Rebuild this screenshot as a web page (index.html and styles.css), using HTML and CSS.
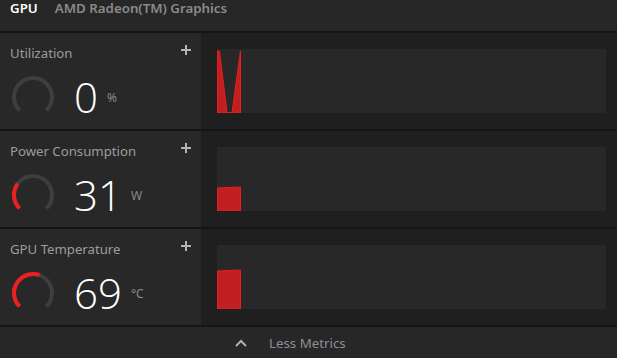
FILE: index.html
```html
<!DOCTYPE html>
<html lang="en">
<head>
    <meta charset="UTF-8">
    <meta name="viewport" content="width=device-width, initial-scale=1.0">
    <title>GPU Metrics</title>
    <link rel="stylesheet" href="styles.css">
</head>
<body>
    <div class="app">
        <!-- Device header -->
        <div class="header">
            <span class="tab active">GPU</span>
            <span class="tab">AMD Radeon(TM) Graphics</span>
        </div>

        <!-- Utilization -->
        <div class="metric">
            <div class="metric-info">
                <div class="metric-title">
                    <span class="label">Utilization</span>
                    <svg class="plus" width="10" height="10" viewBox="0 0 10 10"><path d="M5 0V10M0 5H10"/></svg>
                </div>
                <div class="reading">
                    <svg class="gauge" width="46" height="46" viewBox="0 0 46 46">
                        <path class="track" d="M9.565 36.435A19 19 0 1 1 36.435 36.435"/>
                    </svg>
                    <span class="value">0</span>
                    <span class="unit">%</span>
                </div>
            </div>
            <div class="metric-chart">
                <svg class="chart" viewBox="0 0 389 64" preserveAspectRatio="none">
                    <polygon class="area" points="0.5,64 0.5,2 2.5,2 10,63.5 15,63.5 23.5,2 23.5,64"/>
                </svg>
            </div>
        </div>

        <!-- Power -->
        <div class="metric">
            <div class="metric-info">
                <div class="metric-title">
                    <span class="label">Power Consumption</span>
                    <svg class="plus" width="10" height="10" viewBox="0 0 10 10"><path d="M5 0V10M0 5H10"/></svg>
                </div>
                <div class="reading">
                    <svg class="gauge" width="46" height="46" viewBox="0 0 46 46">
                        <path class="track" d="M9.565 36.435A19 19 0 1 1 36.435 36.435"/>
                        <path class="level" pathLength="100" stroke-dasharray="30 200" d="M9.565 36.435A19 19 0 1 1 36.435 36.435"/>
                    </svg>
                    <span class="value">31</span>
                    <span class="unit">W</span>
                </div>
            </div>
            <div class="metric-chart">
                <svg class="chart" viewBox="0 0 389 64" preserveAspectRatio="none">
                    <polygon class="area" points="0.5,64 0.5,41 23.5,40 23.5,64"/>
                </svg>
            </div>
        </div>

        <!-- Temperature -->
        <div class="metric">
            <div class="metric-info">
                <div class="metric-title">
                    <span class="label">GPU Temperature</span>
                    <svg class="plus" width="10" height="10" viewBox="0 0 10 10"><path d="M5 0V10M0 5H10"/></svg>
                </div>
                <div class="reading">
                    <svg class="gauge" width="46" height="46" viewBox="0 0 46 46">
                        <path class="track" d="M9.565 36.435A19 19 0 1 1 36.435 36.435"/>
                        <path class="level" pathLength="100" stroke-dasharray="57.5 200" d="M9.565 36.435A19 19 0 1 1 36.435 36.435"/>
                    </svg>
                    <span class="value">69</span>
                    <span class="unit">°C</span>
                </div>
            </div>
            <div class="metric-chart">
                <svg class="chart" viewBox="0 0 389 64" preserveAspectRatio="none">
                    <polygon class="area" points="0.5,64 0.5,26 23.5,25 23.5,64"/>
                </svg>
            </div>
        </div>

        <!-- Footer toggle -->
        <div class="footer">
            <svg class="chevron" width="12" height="8" viewBox="0 0 12 8"><path d="M1 7L6 2L11 7"/></svg>
            <span>Less Metrics</span>
        </div>
    </div>
</body>
</html>
```

FILE: styles.css
```css
body {
    margin: 0;
    padding: 0;
    background: #272727;
    font-family: 'Noto Sans', 'Open Sans', sans-serif;
    color: #9a9a9a;
}
.app {
    width: 617px;
    height: 358px;
    display: flex;
    flex-direction: column;
    overflow: hidden;
}
.header {
    height: 31px;
    border-bottom: 2px solid #151515;
    background: #272727;
    display: flex;
    gap: 17px;
    padding-left: 10px;
    font-size: 13.3px;
    font-weight: 600;
    line-height: 16px;
}
.tab {
    color: #8a8a8a;
}
.tab.active {
    color: #ffffff;
}
.metric {
    height: 96px;
    border-bottom: 2px solid #151515;
    display: grid;
    grid-template-columns: 201px 1fr;
}
.metric-info {
    background: #282828;
    padding: 11px 10px 0 10px;
}
.metric-title {
    display: flex;
    justify-content: space-between;
    align-items: flex-start;
}
.label {
    font-size: 13.2px;
    line-height: 18px;
    color: #9c9c9c;
}
.plus {
    margin-top: 1px;
}
.plus path {
    stroke: #b4b4b4;
    stroke-width: 2;
    fill: none;
}
.reading {
    display: flex;
    align-items: center;
    margin-top: 12px;
}
.gauge path {
    fill: none;
    stroke-width: 4;
}
.gauge .track {
    stroke: #3e3e3e;
}
.gauge .level {
    stroke: #ee1f1f;
}
.value {
    font-family: 'Open Sans', sans-serif;
    font-weight: 300;
    font-size: 42px;
    line-height: 1;
    color: #ffffff;
    margin-left: 18px;
}
.unit {
    font-size: 12px;
    color: #8a8a8a;
    margin-left: 9px;
}
.metric-chart {
    background: #1f1f1f;
    padding: 16px 11px 16px 16px;
}
.chart {
    display: block;
    width: 389px;
    height: 64px;
    background: #282828;
}
.area {
    fill: #c22020;
    stroke: #ea1d1d;
    stroke-width: 1;
}
.footer {
    flex: 1;
    display: flex;
    align-items: center;
    padding-left: 235px;
    gap: 22px;
    font-size: 13.3px;
    color: #8b9098;
    background: #272727;
}
.chevron path {
    fill: none;
    stroke: #b0b0b0;
    stroke-width: 2;
}
```
